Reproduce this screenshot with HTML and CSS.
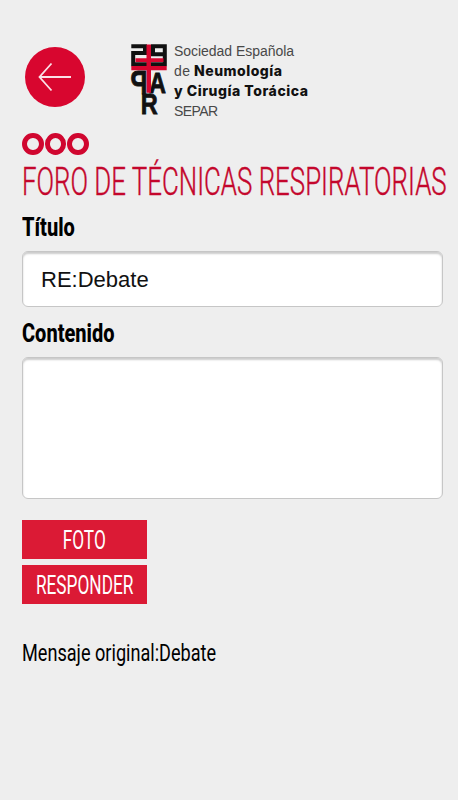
FILE: index.html
```html
<!DOCTYPE html>
<html lang="es">
  <head>
    <meta charset="UTF-8" />
    <meta name="viewport" content="width=device-width, initial-scale=1.0" />
    <title>Foro de Técnicas Respiratorias</title>
    <link rel="stylesheet" href="styles.css">
  </head>
  <body>
    <header class="header">
      <a class="back" href="#" aria-label="Volver">
        <svg width="60" height="60" viewBox="0 0 60 60">
          <circle cx="30" cy="30" r="30" fill="#d8062f" />
          <path d="M46 30H15M26.500 16.500L14.500 30L26.500 43.500" fill="none" stroke="#fbdfe6" stroke-width="1.800" />
        </svg>
      </a>
      <svg class="logo" width="180" height="76" viewBox="0 0 180 76">
        <g fill="none" stroke="#111" stroke-width="4">
          <path d="M1.300 3.300H15V9.900H3.200V21.300H17" />
          <path d="M20 21.300H34.800V3.300H23V11.300H34.800" />
        </g>
        <g class="logo-letters">
          <text class="p" transform="translate(17.500 51) scale(-1 1)" textLength="17" lengthAdjust="spacingAndGlyphs">P</text>
          <text x="19" y="50" textLength="17" lengthAdjust="spacingAndGlyphs">A</text>
          <text x="10.800" y="71" textLength="17" lengthAdjust="spacingAndGlyphs">R</text>
        </g>
        <path d="M16.500 1.500h4.500v13.800h12.500v3.600H21v4.100h15.700v4.300H21v22.400h-4.500V27.300H1.300V23h15.200v-4.100H5.500v-3.600h11z" fill="#d8062f" />
        <g class="logo-name">
          <text x="44" y="13" textLength="120">Sociedad Española</text>
          <text x="44" y="33" textLength="16">de</text>
          <text class="strong" x="64" y="33" textLength="88">Neumología</text>
          <text class="strong" x="44" y="53" textLength="134">y Cirugía Torácica</text>
          <text x="44" y="73" textLength="44">SEPAR</text>
        </g>
      </svg>
    </header>
    <main class="content">
      <div class="rings"><i></i><i></i><i></i></div>
      <h1 class="title"><span>FORO DE TÉCNICAS RESPIRATORIAS</span></h1>
      <form>
        <label class="label" for="titulo"><span>Título</span></label>
        <input class="field" type="text" id="titulo" value="RE:Debate" />
        <label class="label" for="contenido"><span>Contenido</span></label>
        <textarea class="field area" id="contenido"></textarea>
        <button class="btn" type="button"><span>FOTO</span></button>
        <button class="btn" type="button"><span>RESPONDER</span></button>
      </form>
      <p class="original"><span>Mensaje original:Debate</span></p>
    </main>
  </body>
</html>
```
FILE: styles.css
```css
* {
  box-sizing: border-box;
}
body {
  margin: 0;
  background-color: #eee;
  font-family: Roboto, "Open Sans", sans-serif;
  color: #000;
}
.header {
  display: flex;
  height: 133px;
  padding: 43px 0 0 25px;
}
.back {
  margin-top: 4px;
  height: 60px;
}
.logo {
  margin-left: 45px;
  overflow: visible;
}
.logo-letters {
  font: bold 29px "Liberation Sans", sans-serif;
  fill: #111;
  stroke: #111;
  stroke-width: 0.8px;
}
.logo-letters .p {
  font-size: 33px;
}
.logo-name {
  font: 14px "Liberation Sans", sans-serif;
  fill: #484848;
}
.logo-name .strong {
  font-family: Inter, sans-serif;
  font-weight: 800;
  fill: #111;
}
.content {
  padding: 0 15px 0 22px;
}
.rings {
  display: flex;
  gap: 1px;
}
.rings i {
  width: 21.6px;
  height: 22px;
  border: 5px solid #d0062f;
  border-radius: 50%;
}
/* narrow lettering */
.title span,
.label span,
.btn span,
.original span {
  display: inline-block;
  transform-origin: 0 50%;
  white-space: nowrap;
}
.title {
  margin: 0 -15px 0 0;
  height: 60px;
  line-height: 53px;
  font-size: 38.5px;
  font-weight: 300;
  color: #c4062c;
  -webkit-text-stroke: 0.4px #c4062c;
  overflow: hidden;
}
.title span {
  transform: scaleX(0.672);
}
.label {
  display: block;
  height: 36px;
  line-height: 26px;
  font-size: 25px;
  font-weight: 800;
}
.label span {
  transform: scaleX(0.8);
}
.field {
  display: block;
  width: 421px;
  height: 56px;
  margin: 0 0 14px;
  padding: 2px 18px 0;
  border: 1px solid #c6c6c6;
  border-radius: 6px;
  box-shadow: inset 0 2px 2px #ccc;
  background: #fff;
  font: 22px "Liberation Sans", sans-serif;
  color: #111;
}
.area {
  height: 142px;
  margin-bottom: 21px;
  resize: none;
}
.btn {
  display: flex;
  justify-content: center;
  align-items: center;
  width: 124.5px;
  height: 39px;
  margin: 0 0 6px;
  padding: 2px 0 0;
  border: 0;
  background-color: #db1a35;
  font: 25px Roboto, sans-serif;
  color: #fff;
}
.btn span {
  transform: scaleX(0.69);
  transform-origin: 50% 50%;
}
.original {
  margin: 31px 0 0;
  font-size: 24.5px;
  line-height: 36px;
}
.original span {
  transform: scaleX(0.739);
}
```
